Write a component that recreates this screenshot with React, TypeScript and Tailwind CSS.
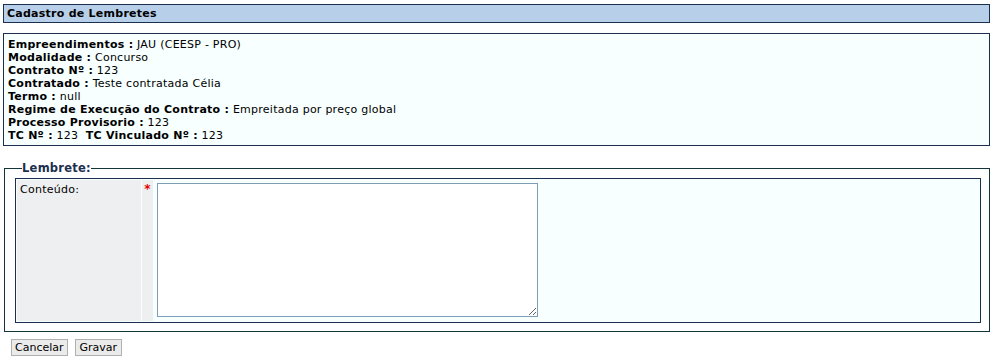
import React from "react";

const info: [string, string][] = [
  ["Empreendimentos", "JAU (CEESP - PRO)"],
  ["Modalidade", "Concurso"],
  ["Contrato Nº", "123"],
  ["Contratado", "Teste contratada Célia"],
  ["Termo", "null"],
  ["Regime de Execução do Contrato", "Empreitada por preço global"],
  ["Processo Provisorio", "123"],
];

export default function App() {
  return (
    <div className="min-h-[360px] w-[993px] bg-white pt-[4px] font-['DejaVu_Sans',Verdana,sans-serif] text-[11px] leading-[13px] tracking-[0.25px] text-black">
      {/* Titulo */}
      <div className="mx-[3px] flex h-[19px] items-center border border-[#1b2f4f] bg-[#b8cfea] px-[3px] font-bold">
        Cadastro de Lembretes
      </div>

      {/* Dados do contrato */}
      <div className="mx-[3px] mt-[10px] border border-[#1b2f4f] bg-[#f7ffff] px-[4px] pt-[4px] pb-[3px]">
        {info.map(([label, value]) => (
          <div key={label}>
            <b>{label} :</b> {value}
          </div>
        ))}
        <div>
          <b>TC Nº :</b> 123&nbsp;&nbsp;<b>TC Vinculado Nº :</b> 123
        </div>
      </div>

      {/* Lembrete */}
      <fieldset className="mt-[15px] ml-[4px] mr-[3px] border border-[#12353a] px-[10px] pt-[3px] pb-[8px] pr-[8px]">
        <legend className="ml-[7px] px-0 text-[11.5px] font-bold leading-[14px] text-[#1b2f4f]">
          Lembrete:
        </legend>
        <div className="flex h-[145px] gap-[1px] border border-[#1b2f4f] bg-[#f7ffff] p-[1px]">
          <div className="w-[124px] bg-[#eeeff0] px-[3px] pt-[3px]">Conteúdo:</div>
          <div className="w-[11px] bg-[#eeeff0] pt-[3px] text-center text-[12px] font-bold text-[#e00000]">
            *
          </div>
          <div className="flex-1 p-[3px]">
            <textarea className="block h-[134px] w-[381px] resize border border-[#7f9db9] bg-white outline-none" />
          </div>
        </div>
      </fieldset>

      {/* Botoes */}
      <div className="mt-[7px] ml-[11px] flex gap-[7px] tracking-normal">
        <button className="h-[17px] border border-[#b0b0b0] bg-[#ebebeb] px-[3px] text-[11px] leading-[15px] text-black">
          Cancelar
        </button>
        <button className="h-[17px] border border-[#b0b0b0] bg-[#ebebeb] px-[4px] text-[11px] leading-[15px] text-black">
          Gravar
        </button>
      </div>
    </div>
  );
}
